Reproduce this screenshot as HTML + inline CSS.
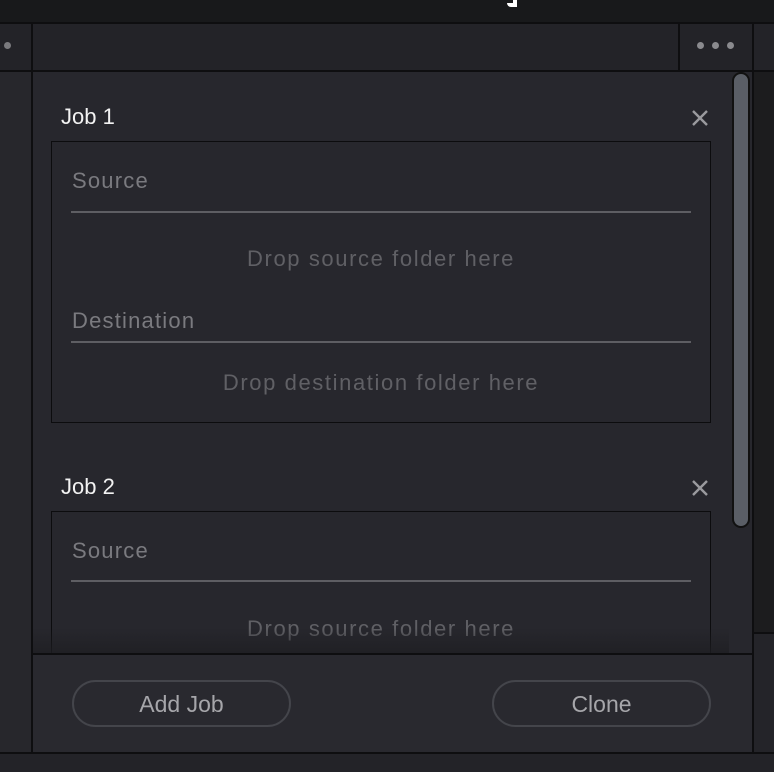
<!DOCTYPE html>
<html><head><style>
*{margin:0;padding:0;box-sizing:border-box}
body{width:774px;height:772px;overflow:hidden;background:#232328;font-family:"Liberation Sans",sans-serif;position:relative}
.a{position:absolute}
.t{color:#7a7a7f;font-size:22px;position:absolute;white-space:nowrap;letter-spacing:1.2px}
.d{color:#606065;font-size:22px;position:absolute;left:52px;width:658px;text-align:center;letter-spacing:1.6px}
.u{position:absolute;left:71px;width:620px;height:2px;background:#5e5e63}
.x{position:absolute;width:18px;height:18px}
.btn{position:absolute;top:680px;width:219px;height:47px;border:2px solid #44454b;border-radius:24px;color:#a6a6aa;font-size:23px;text-align:center;line-height:45px}
</style></head><body>
<div class="a" style="left:0;top:0;width:774px;height:22px;background:#18191b"></div>
<div class="a" style="left:513px;top:0;width:4px;height:7px;background:#fff"></div>
<div class="a" style="left:507px;top:3px;width:10px;height:4px;background:#fff;border-radius:0 0 5px 5px"></div>
<div class="a" style="left:0;top:22px;width:774px;height:2px;background:#0e0e10"></div>
<div class="a" style="left:0;top:24px;width:774px;height:46px;background:#232328"></div>
<div class="a" style="left:4px;top:42px;width:7px;height:7px;border-radius:50%;background:#7a7a7e"></div>
<div class="a" style="left:697px;top:42px;width:7px;height:7px;border-radius:50%;background:#8a8a8e"></div>
<div class="a" style="left:712px;top:42px;width:7px;height:7px;border-radius:50%;background:#8a8a8e"></div>
<div class="a" style="left:727px;top:42px;width:7px;height:7px;border-radius:50%;background:#8a8a8e"></div>
<div class="a" style="left:0;top:70px;width:774px;height:2px;background:#0e0e10"></div>
<div class="a" style="left:0;top:72px;width:31px;height:680px;background:#27272c"></div>
<div class="a" style="left:753px;top:72px;width:21px;height:680px;background:#1c1c1e"></div>
<div class="a" style="left:753px;top:632px;width:21px;height:2px;background:#0e0e10"></div>
<div class="a" style="left:753px;top:634px;width:21px;height:118px;background:#242429"></div>
<div class="a" style="left:31px;top:24px;width:2px;height:729px;background:#0e0e10"></div>
<div class="a" style="left:678px;top:24px;width:2px;height:46px;background:#0e0e10"></div>
<div class="a" style="left:752px;top:24px;width:2px;height:729px;background:#0e0e10"></div>
<div class="a" style="left:33px;top:72px;width:719px;height:582px;background:#27272d"></div>
<div class="a" style="left:732px;top:72px;width:18px;height:456px;border:2px solid #111;border-radius:9px;background:#5a5e66"></div>

<div class="a" style="left:61px;top:104px;color:#f2f2f2;font-size:22px">Job 1</div>
<svg class="x" style="left:691px;top:109px" viewBox="0 0 18 18"><path d="M2 2L16 16M16 2L2 16" stroke="#9a9a9e" stroke-width="2.4"/></svg>
<div class="a" style="left:51px;top:141px;width:660px;height:282px;border:1px solid #0c0c0e"></div>
<div class="t" style="left:72px;top:168px">Source</div>
<div class="u" style="top:211px"></div>
<div class="d" style="top:246px">Drop source folder here</div>
<div class="t" style="left:72px;top:308px">Destination</div>
<div class="u" style="top:341px"></div>
<div class="d" style="top:370px">Drop destination folder here</div>

<div class="a" style="left:61px;top:474px;color:#f2f2f2;font-size:22px">Job 2</div>
<svg class="x" style="left:691px;top:479px" viewBox="0 0 18 18"><path d="M2 2L16 16M16 2L2 16" stroke="#9a9a9e" stroke-width="2.4"/></svg>
<div class="a" style="left:51px;top:511px;width:660px;height:150px;border:1px solid #0c0c0e"></div>
<div class="t" style="left:72px;top:538px">Source</div>
<div class="u" style="top:580px"></div>
<div class="d" style="top:616px">Drop source folder here</div>
<div class="a" style="left:33px;top:628px;width:696px;height:26px;background:linear-gradient(rgba(30,30,34,0),rgba(30,30,34,0.8))"></div>

<div class="a" style="left:33px;top:653px;width:719px;height:2px;background:#0e0e10"></div>
<div class="a" style="left:33px;top:655px;width:719px;height:97px;background:#29292f"></div>
<div class="btn" style="left:72px">Add Job</div>
<div class="btn" style="left:492px">Clone</div>
<div class="a" style="left:0;top:752px;width:774px;height:2px;background:#0e0e10"></div>
</body></html>
